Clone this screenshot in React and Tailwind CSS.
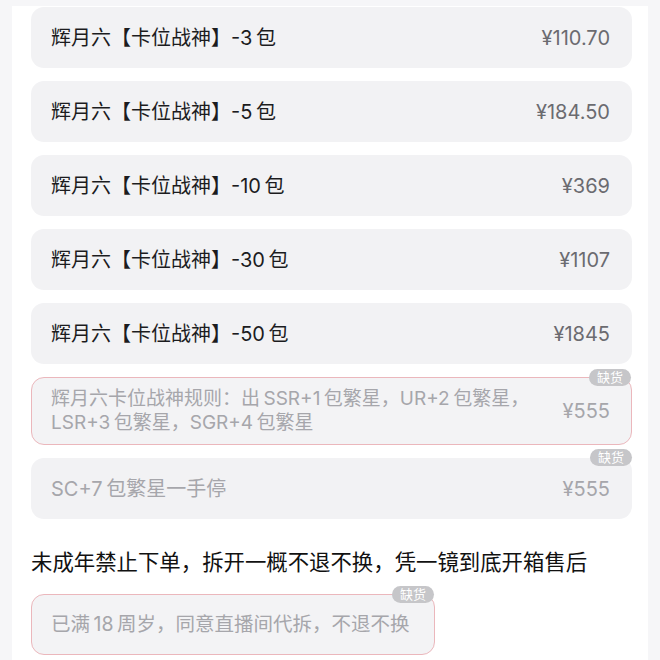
const font = { fontFamily: 'Inter, "Noto Sans CJK SC", sans-serif' };

const items = [
  { name: '辉月六【卡位战神】-3\u2009包', price: '¥110.70' },
  { name: '辉月六【卡位战神】-5\u2009包', price: '¥184.50' },
  { name: '辉月六【卡位战神】-10\u2009包', price: '¥369' },
  { name: '辉月六【卡位战神】-30\u2009包', price: '¥1107' },
  { name: '辉月六【卡位战神】-50\u2009包', price: '¥1845' },
];

function Badge() {
  return (
    <span className="absolute -top-[9px] right-0 flex h-[17px] w-[42px] items-center justify-center rounded-[9px] bg-[#c6c6c9] text-[13px] leading-none text-white">
      缺货
    </span>
  );
}

export default function App() {
  return (
    <div className="min-h-[660px] w-[660px] overflow-hidden bg-[#f6f6f8] pt-[6px]" style={font}>
      <div className="ml-[12px] mr-[12px] min-h-[660px] bg-white pb-6 pl-[19px] pr-[16px] pt-[1px]">
        <div className="flex flex-col gap-[13px]">
          {items.map((it) => (
            <div
              key={it.name}
              className="flex h-[61px] items-center justify-between rounded-[13px] bg-[#f2f2f4] pl-[20px] pr-[22px]"
            >
              <span className="text-[20px] text-[#1c1c1e]">{it.name}</span>
              <span className="text-[20px] text-[#6b6b70]">{it.price}</span>
            </div>
          ))}

          <div className="relative flex h-[68px] items-center justify-between rounded-[13px] border border-[#ebb7bc] bg-[#f3f3f5] pl-[19px] pr-[21px]">
            <span className="w-[500px] text-[19px] leading-[24px] text-[#a6a6ab]">
              辉月六卡位战神规则：出&#8201;SSR+1&#8201;包繁星，UR+2&#8201;包繁星，LSR+3&#8201;包繁星，SGR+4&#8201;包繁星
            </span>
            <span className="text-[20px] text-[#a6a6ab]">¥555</span>
            <Badge />
          </div>

          <div className="relative flex h-[61px] items-center justify-between rounded-[13px] bg-[#f2f2f4] pl-[20px] pr-[22px]">
            <span className="text-[20px] text-[#a6a6ab]">SC+7&#8201;包繁星一手停</span>
            <span className="text-[20px] text-[#a6a6ab]">¥555</span>
            <Badge />
          </div>
        </div>

        <div className="mt-[28px] text-[21.4px] leading-[30px] text-[#111]">
          未成年禁止下单，拆开一概不退不换，凭一镜到底开箱售后
        </div>

        <div className="relative mt-[17px] flex h-[61px] w-[404px] items-center rounded-[13px] border border-[#ebb7bc] bg-[#f3f3f5] pl-[19px]">
          <span className="text-[19.5px] text-[#a6a6ab]">已满&#8201;18&#8201;周岁，同意直播间代拆，不退不换</span>
          <Badge />
        </div>
      </div>
    </div>
  );
}
